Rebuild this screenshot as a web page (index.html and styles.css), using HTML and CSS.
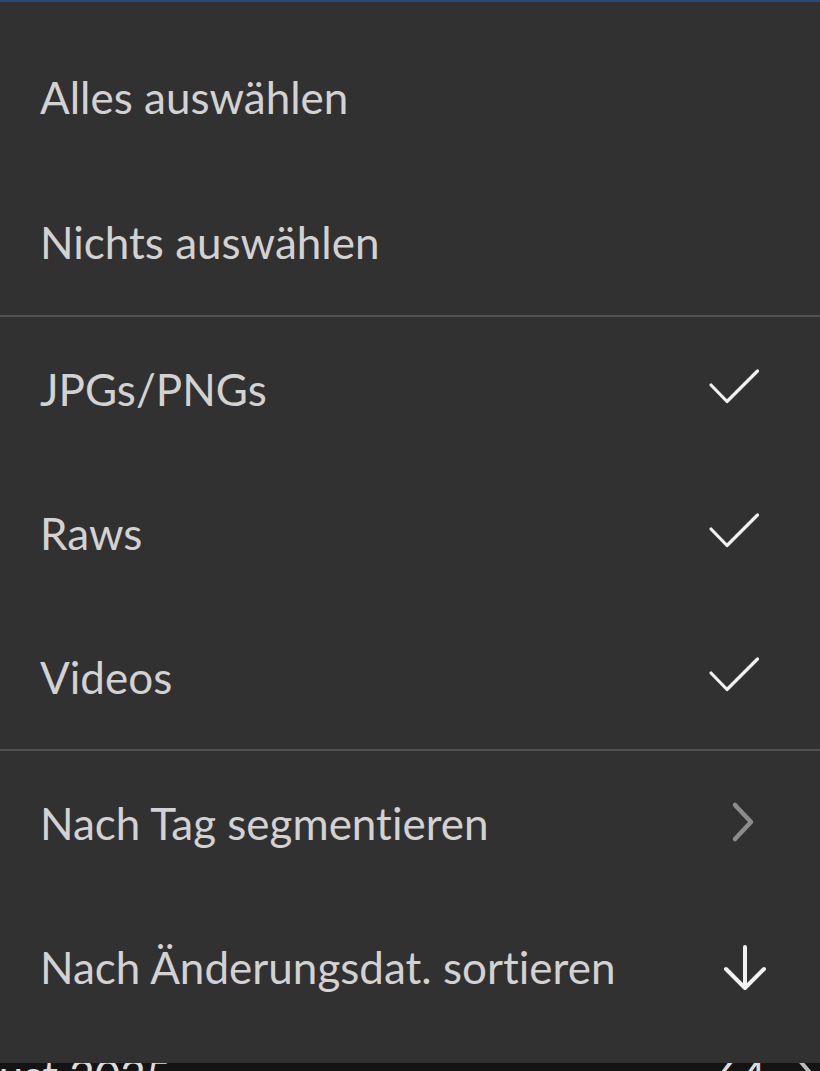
FILE: index.html
```html
<!DOCTYPE html>
<html lang="de">
<head>
<meta charset="utf-8">
<link rel="stylesheet" href="styles.css">
</head>
<body>
<div class="screen">
  <div class="content">
    <div class="group-row">
      <span class="group-title">August 2025</span>
      <span class="group-meta"><span class="group-count">64</span>
        <svg class="group-chev" width="20" height="40" viewBox="0 0 20 40"><path d="M4 6 L16 20 L4 34" fill="none" stroke="#bdbdbd" stroke-width="4" stroke-linecap="round" stroke-linejoin="round"/></svg>
      </span>
    </div>
  </div>

  <div class="menu">
    <div class="menu-section">
      <div class="menu-item"><span class="label">Alles auswählen</span></div>
      <div class="menu-item"><span class="label">Nichts auswählen</span></div>
    </div>
    <div class="menu-section">
      <div class="menu-item"><span class="label">JPGs/PNGs</span>
        <svg class="icon" width="70" height="60" viewBox="0 0 70 60"><path d="M11 26 L27 42.5 L57.5 12" fill="none" stroke="#f0f0f0" stroke-width="3.2" stroke-linecap="round" stroke-linejoin="round"/></svg>
      </div>
      <div class="menu-item"><span class="label">Raws</span>
        <svg class="icon" width="70" height="60" viewBox="0 0 70 60"><path d="M11 26 L27 42.5 L57.5 12" fill="none" stroke="#f0f0f0" stroke-width="3.2" stroke-linecap="round" stroke-linejoin="round"/></svg>
      </div>
      <div class="menu-item"><span class="label">Videos</span>
        <svg class="icon" width="70" height="60" viewBox="0 0 70 60"><path d="M11 26 L27 42.5 L57.5 12" fill="none" stroke="#f0f0f0" stroke-width="3.2" stroke-linecap="round" stroke-linejoin="round"/></svg>
      </div>
    </div>
    <div class="menu-section">
      <div class="menu-item"><span class="label">Nach Tag segmentieren</span>
        <svg class="icon" width="70" height="60" viewBox="0 0 70 60"><path d="M35 12 L51 29 L35 46" fill="none" stroke="#8c8c8c" stroke-width="4.5" stroke-linecap="round" stroke-linejoin="round"/></svg>
      </div>
      <div class="menu-item"><span class="label">Nach Änderungsdat. sortieren</span>
        <svg class="icon" width="70" height="60" viewBox="0 0 70 60"><path d="M45 10 L45 51 M26 32 L45 51 L64 32" fill="none" stroke="#f2f2f2" stroke-width="4" stroke-linecap="round" stroke-linejoin="round"/></svg>
      </div>
    </div>
  </div>
</div>
</body>
</html>
```

FILE: styles.css
```css
* { box-sizing: border-box; }

html, body {
  margin: 0;
  padding: 0;
}

body {
  background: #141414;
  font-family: "Lato", "Open Sans", "Liberation Sans", sans-serif;
  font-variant-ligatures: none;
  color: #d2d2d2;
}

.screen {
  position: relative;
  width: 820px;
  height: 1071px;
  overflow: hidden;
}

.content {
  padding-top: 1045px;
}

.group-row {
  display: flex;
  align-items: center;
  justify-content: space-between;
  height: 60px;
  padding-right: 4px;
}

.group-title {
  font-size: 44px;
  color: #dcdcdc;
  text-indent: -78px;
  white-space: nowrap;
}

.group-meta {
  display: flex;
  align-items: center;
  gap: 30px;
}

.group-count {
  font-size: 44px;
  color: #dcdcdc;
}

.menu {
  position: absolute;
  top: 0;
  left: 0;
  width: 820px;
  height: 1063px;
  background: #313131;
  border-top: 2px solid #2a4b7e;
  padding-top: 23px;
}

.menu-section + .menu-section {
  border-top: 2px solid #505050;
}

.menu-item {
  display: flex;
  align-items: center;
  justify-content: space-between;
  height: 144px;
  padding: 0 50px 0 40px;
}

.menu-section:nth-child(1) .menu-item:last-child {
  height: 146px;
}

.label {
  font-size: 44px;
  color: #d2d2d2;
  white-space: nowrap;
}

.icon {
  display: block;
  flex: none;
}
```
